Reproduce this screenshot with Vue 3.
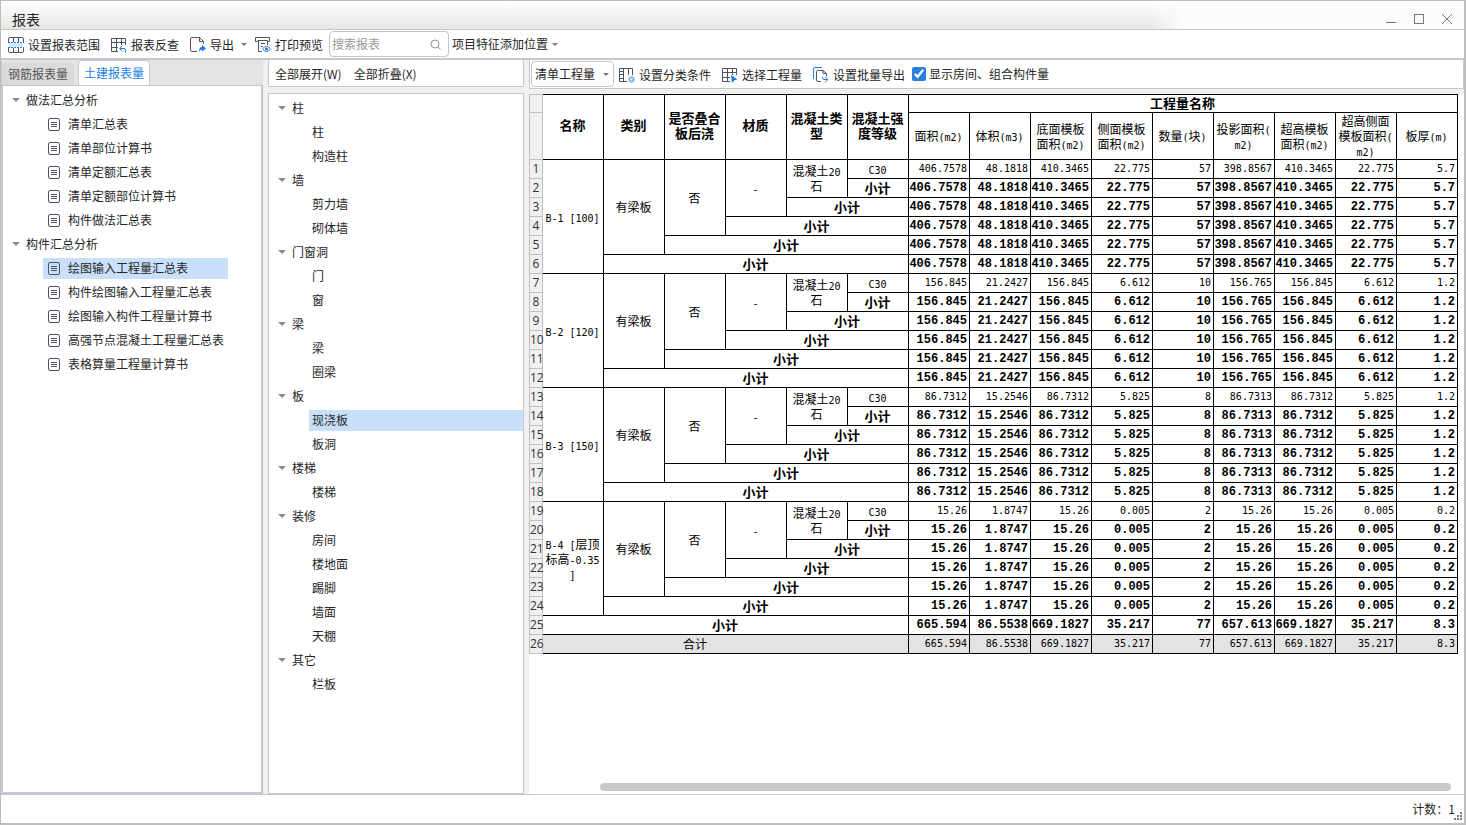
<script setup>
import { ref } from 'vue'

const search = ref('')
const mode = ref('清单工程量')
const showRooms = ref(true)

const reportTree = [
  { name: '做法汇总分析', children: ['清单汇总表', '清单部位计算书', '清单定额汇总表', '清单定额部位计算书', '构件做法汇总表'] },
  { name: '构件汇总分析', children: ['绘图输入工程量汇总表', '构件绘图输入工程量汇总表', '绘图输入构件工程量计算书', '高强节点混凝土工程量汇总表', '表格算量工程量计算书'] },
]
const partTree = [
  { name: '柱', children: ['柱', '构造柱'] },
  { name: '墙', children: ['剪力墙', '砌体墙'] },
  { name: '门窗洞', children: ['门', '窗'] },
  { name: '梁', children: ['梁', '圈梁'] },
  { name: '板', children: ['现浇板', '板洞'] },
  { name: '楼梯', children: ['楼梯'] },
  { name: '装修', children: ['房间', '楼地面', '踢脚', '墙面', '天棚'] },
  { name: '其它', children: ['栏板'] },
]
const activeReport = ref('绘图输入工程量汇总表')
const activePart = ref('现浇板')

const keyColumns = [['名称'], ['类别'], ['是否叠合', '板后浇'], ['材质'], ['混凝土类', '型'], ['混凝土强', '度等级']]
const valueColumns = [
  ['面积(m2)'], ['体积(m3)'], ['底面模板', '面积(m2)'], ['侧面模板', '面积(m2)'], ['数量(块)'],
  ['投影面积(', 'm2)'], ['超高模板', '面积(m2)'], ['超高侧面', '模板面积(', 'm2)'], ['板厚(m)'],
]
const slabs = [
  { name: ['B-1 [100]'], values: ['406.7578', '48.1818', '410.3465', '22.775', '57', '398.8567', '410.3465', '22.775', '5.7'] },
  { name: ['B-2 [120]'], values: ['156.845', '21.2427', '156.845', '6.612', '10', '156.765', '156.845', '6.612', '1.2'] },
  { name: ['B-3 [150]'], values: ['86.7312', '15.2546', '86.7312', '5.825', '8', '86.7313', '86.7312', '5.825', '1.2'] },
  { name: ['B-4 [层顶', '标高-0.35', ']'], values: ['15.26', '1.8747', '15.26', '0.005', '2', '15.26', '15.26', '0.005', '0.2'] },
]
const totals = ['665.594', '86.5538', '669.1827', '35.217', '77', '657.613', '669.1827', '35.217', '8.3']

const rows = []
for (const slab of slabs) {
  for (let i = 0; i < 6; i++) {
    const cells = []
    if (i === 0) {
      cells.push({ lines: slab.name, rowspan: 6 }, { lines: ['有梁板'], rowspan: 5 }, { lines: ['否'], rowspan: 4 },
        { lines: ['-'], rowspan: 3, dash: true }, { lines: ['混凝土20', '石'], rowspan: 2 }, { lines: ['C30'] })
    } else {
      cells.push({ lines: ['小计'], colspan: i, bold: true })
    }
    rows.push({ cells, values: slab.values, bold: i > 0 })
  }
}
rows.push({ cells: [{ lines: ['小计'], colspan: 6, bold: true }], values: totals, bold: true })
rows.push({ cells: [{ lines: ['合计'], colspan: 5, open: true }, { lines: [''] }], values: totals, bold: false, total: true })

const runs = (text) => (text.match(/[\x20-\x7e]+|[^\x20-\x7e]+/g) || []).map((t) => ({ t, latin: /^[\x20-\x7e]/.test(t) }))
</script>

<template>
  <div class="window">
    <header class="titlebar">
      <h1>报表</h1>
      <div class="controls">
        <button aria-label="最小化"><svg width="12" height="12"><path d="M1 9.5H11" /></svg></button>
        <button aria-label="最大化"><svg width="12" height="12"><rect x="1.5" y="1.5" width="9" height="9" /></svg></button>
        <button aria-label="关闭"><svg width="12" height="12"><path d="M1 1L11 11M11 1L1 11" /></svg></button>
      </div>
    </header>

    <div class="toolbar">
      <button class="tool">
        <svg class="ico" width="16" height="16" viewBox="0 0 16 16">
          <path d="M1 6H15V10H1Z" fill="#dcebfb" stroke="none" />
          <path d="M.5 5V2Q.5 .5 2 .5H14Q15.5 .5 15.5 2V5M.5 11V14Q.5 15.5 2 15.5H14Q15.5 15.5 15.5 14V11M5.5 .5V5M10.5 .5V5M5.5 11V15.5M10.5 11V15.5" />
          <path class="blue" d="M0 5.5H16M0 10.5H16" stroke-dasharray="2 1" />
        </svg>设置报表范围
      </button>
      <button class="tool second">
        <svg class="ico" width="16" height="16" viewBox="0 0 16 16">
          <path d="M7 14.5H.5V1.5H14.5V8M.5 5.5H14.5M.5 10.5H7M5.5 1.5V14.5M10.5 1.5V8" />
          <path class="blue" d="M9 11.5H13Q14.5 11.5 14.5 13V15.5M11.5 8.5L8.5 11.5L11.5 14.5" />
        </svg>报表反查
      </button>
      <button class="tool">
        <svg class="ico" width="16" height="16" viewBox="0 0 16 16">
          <path d="M7 14.5H2Q.5 14.5 .5 13V2Q.5 .5 2 .5H9.5L13.5 4.5V7M9.5 .5V4.5H13.5" />
          <path class="bluefill" d="M9 15Q9 10 12 10V8L16 11.500L12 14.500V12.500Q10 12.500 9 15Z" />
        </svg>导出
      </button>
      <button class="drop" aria-label="导出选项"><i class="caret"></i></button>
      <button class="tool">
        <svg class="ico" width="16" height="16" viewBox="0 0 16 16">
          <path d="M2.5 4.500H.5V.5H14.5V4.500H12.5M2.5 3.5H12.5V8M3.5 3.5V14.5H7M6 6.5H10M6 9.5H8" />
          <path class="blue" d="M7.5 12Q11.5 6.500 15.500 12Q11.500 17.500 7.500 12Z" />
          <circle class="bluefill" cx="11.5" cy="12" r="1.5" />
        </svg>打印预览
      </button>
      <div class="search">
        <input v-model="search" type="text" placeholder="搜索报表" aria-label="搜索报表" />
        <svg width="11" height="11" viewBox="0 0 11 11"><circle cx="5" cy="5" r="4" /><path d="M8 8L10.5 10.5" /></svg>
      </div>
      <button class="tool position">项目特征添加位置<i class="caret"></i></button>
    </div>

    <main class="body">
      <section class="reports">
        <div class="tabs">
          <button class="tab">钢筋报表量</button>
          <button class="tab active">土建报表量</button>
        </div>
        <div class="panel">
          <ul class="tree">
            <template v-for="group in reportTree" :key="group.name">
              <li><button class="node parent"><i class="fold"></i>{{ group.name }}</button></li>
              <li v-for="item in group.children" :key="item">
                <button class="node report" :class="{ selected: item === activeReport }" @click="activeReport = item">
                  <svg width="12" height="13" viewBox="0 0 12 13">
                    <rect x=".5" y=".5" width="11" height="12" rx="1.5" /><path d="M3 4.5H9M3 6.5H9M3 8.5H9" />
                  </svg>{{ item }}
                </button>
              </li>
            </template>
          </ul>
        </div>
      </section>

      <section class="parts">
        <div class="fold-bar"><button>全部展开(W)</button><button>全部折叠(X)</button></div>
        <ul class="tree">
          <template v-for="group in partTree" :key="group.name">
            <li><button class="node parent"><i class="fold"></i>{{ group.name }}</button></li>
            <li v-for="item in group.children" :key="item">
              <button class="node part" :class="{ selected: item === activePart }" @click="activePart = item">{{ item }}</button>
            </li>
          </template>
        </ul>
      </section>

      <section class="detail">
        <div class="detail-bar">
          <div class="select">
            <select v-model="mode" aria-label="工程量类型"><option>清单工程量</option></select>
            <i class="caret"></i>
          </div>
          <button class="tool">
            <svg class="ico" width="16" height="16" viewBox="0 0 16 16">
              <path d="M8 14.5H.5V1.5H13.5V8M4.5 1.5V14.5M9.5 1.5V8M.5 4.5H4.5M.5 7.5H4.5M.5 11.5H4.5" />
              <circle cx="12.5" cy="12.5" r="3" fill="#8bb9ef" stroke="#8bb9ef" stroke-dasharray="1 1" /><circle cx="12.5" cy="12.5" r="1" fill="#fff" stroke="none" />
            </svg>设置分类条件
          </button>
          <button class="tool">
            <svg class="ico" width="16" height="16" viewBox="0 0 16 16">
              <path d="M8 14.5H.5V1.5H14.5V8M.5 5.5H14.5M.5 10.5H8M5.5 1.5V14.5M10.5 1.5V8" />
              <path class="bluefill" d="M9 8L15.500 12.500L12.500 13L10 16Z" />
            </svg>选择工程量
          </button>
          <button class="tool">
            <svg class="ico" width="16" height="16" viewBox="0 0 16 16">
              <path class="blue" d="M.5 12V2Q.5 .5 2 .5H9" />
              <path d="M8 14.5H5Q3.5 14.5 3.5 13V4.5Q3.5 3.5 4.5 3.5H10L13.5 6.5V9M10 3.5V6.5H13.5" />
              <path class="blue" d="M9.5 10V11Q9.5 12.5 11 12.5H14.5M12 10L15 12.5L12 15.5" />
            </svg>设置批量导出
          </button>
          <label class="check"><input v-model="showRooms" type="checkbox" />显示房间、组合构件量</label>
        </div>

        <div class="sheet">
          <table>
            <colgroup><col class="num-col" /><col v-for="n in 15" :key="n" class="data-col" /></colgroup>
            <thead>
              <tr class="top">
                <td class="num"></td>
                <th v-for="(c, i) in keyColumns" :key="i" rowspan="2"><div v-for="l in c" :key="l">{{ l }}</div></th>
                <th colspan="9">工程量名称</th>
              </tr>
              <tr class="units">
                <td class="num"></td>
                <th v-for="(c, i) in valueColumns" :key="i" class="unit">
                  <div v-for="l in c" :key="l"><span v-for="r in runs(l)" :key="r.t" :class="{ latin: r.latin }">{{ r.t }}</span></div>
                </th>
              </tr>
            </thead>
            <tbody>
              <tr v-for="(row, i) in rows" :key="i" :class="{ total: row.total }">
                <td class="num">{{ i + 1 }}</td>
                <td v-for="(c, j) in row.cells" :key="'k' + j" :rowspan="c.rowspan" :colspan="c.colspan" :class="{ bold: c.bold, open: c.open, dash: c.dash }">
                  <div v-for="l in c.lines" :key="l"><span v-for="r in runs(l)" :key="r.t" :class="{ latin: r.latin }">{{ r.t }}</span></div>
                </td>
                <td v-for="(v, j) in row.values" :key="'v' + j" class="value" :class="{ strong: row.bold }">{{ v }}</td>
              </tr>
            </tbody>
          </table>
          <div class="scroll"><div class="thumb"></div></div>
        </div>
      </section>
    </main>

    <footer class="status">
      <span>计数：1</span>
      <svg class="grip" width="9" height="9"><path d="M6 0h2v2h-2zM3 3h2v2h-2zM6 3h2v2h-2zM0 6h2v2h-2zM3 6h2v2h-2zM6 6h2v2h-2z" /></svg>
    </footer>
  </div>
</template>

<style>
body { margin: 0; }
</style>

<style scoped>
* { box-sizing: border-box; }
.window {
  display: flex; flex-direction: column; height: 100vh; overflow: hidden;
  border: 1px solid #bdbdbd; border-right-width: 2px; border-bottom-width: 2px;
  background: #fff; color: #262626;
  font: 12px/18px "Noto Sans CJK SC", sans-serif;
}
button, input, select { margin: 0; padding: 0; border: 0; background: none; color: inherit; font: inherit; white-space: nowrap; }
.titlebar {
  display: flex; justify-content: space-between; height: 29px; flex: none; padding: 0 11px;
  border-bottom: 1px solid #c5c8cc;
  background: linear-gradient(90deg, transparent 1150px, #fcfcfc 1180px), linear-gradient(#fff, #e6e6e6);
}
h1 { margin: 8px 0 0; font-size: 14px; font-weight: 400; line-height: 20px; }
.controls { display: flex; gap: 16px; padding-top: 12px; }
.controls button { width: 12px; height: 12px; }
svg { display: block; flex: none; fill: none; }
.controls svg { stroke: #777; }
.toolbar { display: flex; align-items: center; height: 30px; flex: none; padding-left: 7px; border-bottom: 2px solid #c5c8cf; }
.tool { display: flex; align-items: center; gap: 4px; height: 26px; margin-right: 11px; }
.toolbar .tool:nth-child(3) { margin-right: 7px; }
.ico { stroke: #4c5564; }
.blue { stroke: #2380e8; }
.bluefill { fill: #1677e6; stroke: none; }
.caret { width: 0; height: 0; border: 3px solid transparent; border-top-color: #777; border-bottom: 0; }
.drop { display: flex; margin-right: 8px; }
.toolbar .tool:not(.position), .detail-bar .tool { padding-top: 2px; }
.search {
  display: flex; align-items: center; width: 120px; height: 26px; margin: 0 3px 0 -5px; padding: 0 7px 0 2px;
  border: 1px solid #c4c6ca; border-radius: 4px;
}
.search input { flex: 1; min-width: 0; outline: 0; }
.search input::placeholder { color: #999; opacity: 1; }
.search svg { stroke: #999; }
.body { display: flex; flex: 1; min-height: 0; background: #f0f0f0; }
.reports { display: flex; flex-direction: column; width: 262px; flex: none; border-left: 1px solid #c8cbd0; }
.tabs { display: flex; align-items: flex-end; gap: 4px; height: 25px; background: #e4e4e4; }
.tab { height: 22px; width: 72px; border-radius: 4px 4px 0 0; background: #dadada; color: #555; }
.tab.active { height: 25px; border: 1px solid #c5c8cf; border-bottom: 0; background: #fff; color: #1a7fe8; }
.panel { flex: 1; border: 2px solid #c5c8cf; border-left-width: 1px; border-top-width: 1px; background: #fff; }
.tree { margin: 0; padding: 0; list-style: none; }
.panel .tree { padding-top: 4px; }
.tree li { height: 21px; margin-bottom: 3px; }
.node { display: flex; align-items: center; height: 21px; padding-bottom: 1px; }
.fold { width: 0; height: 0; margin-right: 6px; border: 4px solid transparent; border-top: 4px solid #888; border-bottom: 0; }
.parent { margin-left: 9px; }
.report { width: 185px; margin-left: 40px; padding-left: 5px; gap: 8px; }
.report svg { stroke: #4c5564; }
.selected { background: #c9e0fa; }
.parts { display: flex; flex-direction: column; width: 256px; flex: none; margin: 0 5px; }
.fold-bar { display: flex; gap: 12px; height: 27px; flex: none; margin-bottom: 6px; padding: 2px 0 0 6px; border: 1px solid #c5c8cf; border-top: 0; background: #fff; }
.parts .tree { flex: 1; padding-top: 4px; border: 1px solid #c5c8cf; background: #fff; }
.part { width: 214px; margin-left: 40px; padding-left: 3px; }
.detail { display: flex; flex-direction: column; flex: 1; min-width: 0; }
.detail-bar { display: flex; align-items: center; height: 29px; flex: none; margin-bottom: 5px; padding-left: 1px; border: 1px solid #c5c8cf; border-top: 0; background: #fff; }
.detail-bar .tool:nth-child(4) { margin-right: 7px; }
.select { display: flex; align-items: center; width: 83px; height: 26px; margin-right: 5px; border: 1px solid #c4c6ca; border-radius: 4px; }
.select select { flex: 1; min-width: 0; padding-left: 3px; appearance: none; outline: 0; }
.select .caret { margin-right: 4px; }
.check { display: flex; align-items: center; gap: 3px; }
.check input { width: 14px; height: 14px; accent-color: #2b7fe0; }
.sheet { display: flex; flex: 1; flex-direction: column; justify-content: space-between; min-height: 0; background: #fff; }
table { width: 929px; table-layout: fixed; border-collapse: separate; border-spacing: 0; color: #000; line-height: 15px; }
.num-col { width: 14px; }
.data-col { width: 61px; }
th, td { height: 19px; padding: 0 1px 1px 0; border: solid #000; border-width: 0 1px 1px 0; text-align: center; vertical-align: middle; white-space: nowrap; }
th { padding-bottom: 2px; font-size: 13px; font-weight: 700; }
th[rowspan] { padding-bottom: 5px; }
.top > * { border-top-width: 1px; }
.units > * { height: 47px; }
.unit { padding-bottom: 1px; font-size: 12px; font-weight: 400; }
td.num { padding: 0; border-color: #c0c0c0; border-left-width: 1px; background: #f0f0f0; color: #333; font: 12px/16px "Open Sans", sans-serif; }
.latin { font: 10px/10px "DejaVu Sans Mono", monospace; white-space: pre; }
.bold { font-size: 13px; font-weight: 700; }
.value { padding-right: 2px; text-align: right; font: 10px/14px "DejaVu Sans Mono", monospace; }
.strong { font: bold 12px/14px "Liberation Mono", monospace; }
.total td:not(.num) { background: #e3e3e3; }
.open { border-right-width: 0; }
.scroll { padding: 0 13px 3px 71px; }
.thumb { height: 8px; border-radius: 4px; background: #cacaca; }
.status { position: relative; display: flex; align-items: center; justify-content: flex-end; height: 29px; flex: none; padding-right: 9px; border-top: 1px solid #c5c8cf; }
.grip { position: absolute; right: 1px; bottom: 2px; fill: #777; }
</style>
